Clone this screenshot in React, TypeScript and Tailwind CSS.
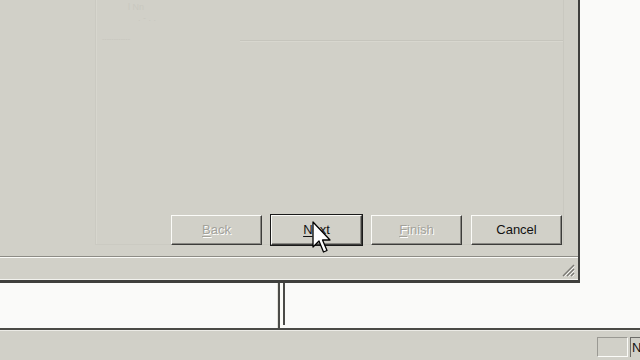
import React from "react";

const face = "bg-[#d1d0c8]";

function WizButton({
  label,
  hot,
  disabled,
  isDefault,
}: {
  label: string;
  hot?: number;
  disabled?: boolean;
  isDefault?: boolean;
}) {
  const text = (
    <span
      className={
        disabled
          ? "text-[#a3a29b] [text-shadow:1px_1px_0_#ffffff]"
          : "text-[#111111]"
      }
    >
      {hot === undefined ? (
        label
      ) : (
        <>
          {label.slice(0, hot)}
          <span className="underline underline-offset-2">{label[hot]}</span>
          {label.slice(hot + 1)}
        </>
      )}
    </span>
  );

  return (
    <div
      className={`w-[93px] h-[32px] ${
        isDefault ? "border border-[#1a1a1a]" : "border border-transparent"
      }`}
    >
      <div
        className={`w-full h-full ${face} border border-t-[#fbfbf8] border-l-[#fbfbf8] border-r-[#3c3c3a] border-b-[#3c3c3a] shadow-[inset_-1px_-1px_0_#8a8984] flex items-center justify-center text-[13px]`}
      >
        {text}
      </div>
    </div>
  );
}

function Cursor() {
  return (
    <svg
      className="absolute left-[312px] top-[221px]"
      width="20"
      height="36"
      viewBox="0 0 20 36"
    >
      <path
        d="M1 1 L1 26 L7 20 L11.5 31 L15 29.5 L10.5 19 L18 19 Z"
        fill="#ffffff"
        stroke="#000000"
        strokeWidth="1.3"
        strokeLinejoin="round"
      />
    </svg>
  );
}

export default function App() {
  return (
    <div
      className="relative w-[640px] h-[360px] overflow-hidden bg-[#fafaf9] flex flex-col"
      style={{ fontFamily: '"Liberation Sans", Arial, sans-serif' }}
    >
      {/* dialog row */}
      <div className="flex h-[283px] shrink-0">
        <div
          className={`w-[580px] h-full ${face} border-r-2 border-b-[3px] border-r-[#3f3f3d] border-b-[#3f3f3d] flex flex-col`}
        >
          {/* faint page content */}
          <div className="flex-1 flex pl-[95px] pr-[14px]">
            <div className="flex-1 h-[245px] border-l border-r border-b border-l-[#cbcac2] border-r-[#c9c8c0] border-b-[#cbcac2] shadow-[inset_1px_0_0_#d7d6ce] flex flex-col">
              <div className="h-[33px] px-[10px] pt-[1px] text-[9px] text-[#c9c8c0] flex flex-col">
                <span className="ml-[22px]">l Nn</span>
                <span className="ml-[32px] -mt-[3px]">. - . .</span>
              </div>
              <div className="flex items-end h-[9px]">
                <span className="w-[140px] pl-[6px] text-[7px] leading-[7px] text-[#c6c5bd] mr-[4px]">
                  ------------
                </span>
                <div className="flex-1 h-[2px] border-t border-t-[#c6c5bd] border-b border-b-[#d8d7cf]" />
              </div>
            </div>
          </div>
          {/* buttons */}
          <div className="flex gap-[7px] pl-[170px] h-[32px] mt-[-32px] shrink-0">
            <WizButton label="Back" hot={0} disabled />
            <WizButton label="Next" hot={0} isDefault />
            <WizButton label="Finish" hot={0} disabled />
            <WizButton label="Cancel" />
          </div>
          <div className="h-[10px] shrink-0" />
          <div className="h-[2px] shrink-0 border-t border-t-[#8d8c86] border-b border-b-[#fbfbf8]" />
          <div className="h-[22px] shrink-0 flex justify-end items-end pr-[3px] pb-[2px] border-b border-b-[#f2f2ee]">
            <svg width="13" height="13" viewBox="0 0 13 13">
              <path d="M12 1 L1 12 M12 5 L5 12 M12 9 L9 12" stroke="#7a7974" strokeWidth="1.4" />
              <path d="M12.5 2.5 L2.5 12.5 M12.5 6.5 L6.5 12.5 M12.5 10.5 L10.5 12.5" stroke="#ffffff" strokeWidth="0.8" />
            </svg>
          </div>
        </div>
        <div className="flex-1" />
      </div>

      {/* panels under dialog */}
      <div className="flex h-[47px] shrink-0 border-b-2 border-b-[#4a4a47]">
        <div className="w-[278px] border-r border-r-[#e3e2dc]" />
        <div className="w-[7px] flex">
          <div className="w-[2px] bg-[#4b4b48]" />
          <div className="w-[3px] bg-[#fbfbf8]" />
          <div className="w-[2px] bg-[#4b4b48] mb-[3px]" />
        </div>
        <div className="flex-1" />
      </div>

      {/* status bar */}
      <div className={`flex-1 ${face} border-t border-t-[#ecebe6] flex items-start pt-[6px]`}>
        <div className="flex-1" />
        <div className="w-[31px] h-[20px] border border-t-[#9a9993] border-l-[#9a9993] border-r-[#fbfbf8] border-b-[#fbfbf8]" />
        <div className="w-[10px] ml-[2px] h-[20px] border-l border-t border-l-[#6d6c68] border-t-[#6d6c68] pl-[1px] text-[13px] leading-[19px] text-[#111111] whitespace-nowrap">
          N
        </div>
      </div>

      <Cursor />
    </div>
  );
}
